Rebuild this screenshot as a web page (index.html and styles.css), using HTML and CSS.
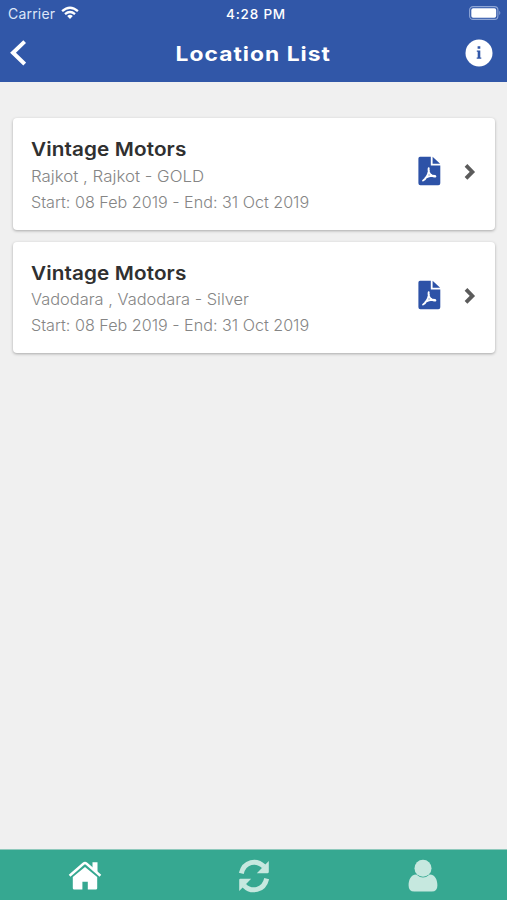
FILE: index.html
```html
<!DOCTYPE html>
<html lang="en">
<head>
<meta charset="utf-8">
<title>Location List</title>
<link rel="stylesheet" href="styles.css">
</head>
<body>
<div class="app">
  <header class="header">
    <div class="status">
      <div class="carrier"><span class="carrier-name">Carrier</span>
        <svg class="wifi" width="18" height="14" viewBox="0 0 18 14"><g fill="none" stroke="#fff" stroke-width="2.3"><path d="M1.1 5.2Q9-1.8 16.9 5.2"/><path d="M4 8.1Q9 3.8 14 8.1"/></g><path fill="#fff" d="M6.2 10Q9 7.7 11.8 10L9 13Z"/></svg>
      </div>
      <time class="time">4:28 PM</time>
      <svg class="battery" width="33" height="14" viewBox="0 0 33 14"><rect x=".6" y=".6" width="28.3" height="12.8" rx="3.5" fill="none" stroke="#8fa6d6" stroke-width="1.1"/><rect x="2.3" y="2.3" width="24.9" height="9.4" rx="1.8" fill="#fff"/><path d="M30.3 4.8Q32.3 7 30.3 9.2Z" fill="#8fa6d6"/></svg>
    </div>
    <nav class="navbar">
      <svg class="back" width="17" height="27" viewBox="0 0 17 27"><path d="M15.7 1.6 4 12.8 15.7 24" fill="none" stroke="#fff" stroke-width="4"/></svg>
      <h1 class="title">Location List</h1>
      <svg class="info" width="28" height="28" viewBox="0 0 28 28"><circle cx="14" cy="14" r="13.5" fill="#fff"/><path fill="#3157a8" d="M12.6 7.2h2.7v2.6h-2.7zM11.8 11.6h3.5v7h1v1.2h-4.6v-1.2h1v-5.8h-.9z"/></svg>
    </nav>
  </header>
  <main class="list">
    <article class="card">
      <div class="details">
        <h2 class="name">Vintage Motors</h2>
        <p class="line place-gold">Rajkot , Rajkot - GOLD</p>
        <p class="line dates">Start: 08 Feb 2019 - End: 31 Oct 2019</p>
      </div>
      <svg class="pdf" width="23" height="30" viewBox="0 0 23 30"><path fill="#2d52a7" d="M2 .7h10.8v8.8h9.5v17.8a2 2 0 0 1-2 2H2.4a2 2 0 0 1-2-2V2.4A1.7 1.7 0 0 1 2 .7ZM14.6.7l7.5 7.1h-7.5z"/><path d="M10.7 12.2c-.7 3 .8 5.6 3 7.3 1.2.8 2.5 1.2 3.7 1M5.1 24.5c2.4-1.1 5.1-5.8 5.8-9.7M7.6 21.6c2.8-1.5 6.1-2.2 9.4-1.6" fill="none" stroke="#fff" stroke-width="1.9" stroke-linecap="round"/></svg>
      <svg class="chevron" width="12" height="18" viewBox="0 0 12 18"><path d="M2 2.4 8.4 8.9 2 15.4" fill="none" stroke="#5b5b5b" stroke-width="3.8"/></svg>
    </article>
    <article class="card">
      <div class="details">
        <h2 class="name">Vintage Motors</h2>
        <p class="line place-silver">Vadodara , Vadodara - Silver</p>
        <p class="line dates">Start: 08 Feb 2019 - End: 31 Oct 2019</p>
      </div>
      <svg class="pdf" width="23" height="30" viewBox="0 0 23 30"><path fill="#2d52a7" d="M2 .7h10.8v8.8h9.5v17.8a2 2 0 0 1-2 2H2.4a2 2 0 0 1-2-2V2.4A1.7 1.7 0 0 1 2 .7ZM14.6.7l7.5 7.1h-7.5z"/><path d="M10.7 12.2c-.7 3 .8 5.6 3 7.3 1.2.8 2.5 1.2 3.7 1M5.1 24.5c2.4-1.1 5.1-5.8 5.8-9.7M7.6 21.6c2.8-1.5 6.1-2.2 9.4-1.6" fill="none" stroke="#fff" stroke-width="1.9" stroke-linecap="round"/></svg>
      <svg class="chevron" width="12" height="18" viewBox="0 0 12 18"><path d="M2 2.4 8.4 8.9 2 15.4" fill="none" stroke="#5b5b5b" stroke-width="3.8"/></svg>
    </article>
  </main>
  <footer class="tabs">
    <div class="tab"><svg width="34" height="30" viewBox="0 0 34 30"><path fill="#fff" d="M17 6 29.2 16v11.2q0 1.4-1.4 1.4h-8v-7.8h-5.4v7.8H6.2q-1.4 0-1.4-1.4V16Z"/><path d="M1.6 14.7 15.4 2.7q1.6-1.3 3.2 0l13.8 12" fill="none" stroke="#fff" stroke-width="2.5"/><path fill="#fff" d="M24.5 1.2h5v11.4l-5-4z"/></svg></div>
    <div class="tab"><svg width="32" height="34" viewBox="0 0 32 34"><g fill="none" stroke="#c6e8df" stroke-width="5"><path d="M3.3 14.4C6.2 2.1 18.5.1 26 7.6"/><path d="M28.7 19.6C25.8 31.9 13.5 33.9 6 26.4"/></g><path fill="#c6e8df" d="M30.8 2v11.1q0 1.1-1.1 1.1H18.8ZM1.2 32V20.9q0-1.1 1.1-1.1h10.9Z"/></svg></div>
    <div class="tab"><svg width="30" height="34" viewBox="0 0 30 34"><path fill="#c6e8df" d="M8.3 15.5Q15 21.6 21.7 15.5C27.6 15.8 29.4 21.3 29.4 26.5Q29.4 32.5 23.8 32.5H6.2Q.6 32.5.6 26.5C.6 21.3 2.4 15.8 8.3 15.5Z"/><circle cx="15" cy="9.3" r="8.5" fill="#c6e8df"/></svg></div>
  </footer>
</div>
</body>
</html>
```
FILE: styles.css
```css
* { box-sizing: border-box; }
body { margin: 0; background: #f0f0f0; font-family: Inter, "Liberation Sans", sans-serif; }
h1, h2, p { margin: 0; }
svg { display: block; flex-shrink: 0; }
.app { height: 900px; display: flex; flex-direction: column; overflow: hidden; }
.header { height: 81.5px; background: #3157a8; color: #fff; flex-shrink: 0; }
.status { height: 26px; display: grid; grid-template-columns: 1fr auto 1fr; align-items: center; padding: 0 5px 0 8px; }
.carrier { display: flex; align-items: center; gap: 6px; color: #dde6f8; }
.carrier-name { font-size: 14px; line-height: 18px; letter-spacing: 0.2px; padding-top: 1px; }
.time { font-size: 13.5px; line-height: 18px; font-weight: 500; letter-spacing: .8px; padding: 2px 0 0 2px; }
.battery { justify-self: end; }
.navbar { height: 54px; display: grid; grid-template-columns: 50px 1fr 50px; align-items: center; padding: 0 14px 0 9px; }
.title { text-align: center; font-size: 20px; line-height: 26px; font-weight: 700; letter-spacing: 0.9px; padding: 1px 0 0 4px; transform: scaleX(1.14); }
.info { justify-self: end; }
.list { flex: 1; padding: 36.5px 12px 0 13px; display: flex; flex-direction: column; gap: 12px; }
.card { height: 111.5px; display: flex; align-items: flex-start; padding: 19px 19px 0 18px; background: #fff; border-radius: 4px; box-shadow: 0 1px 3px #0000004d; white-space: nowrap; }
.details { flex: 1; }
.name { font-size: 19px; line-height: 26px; font-weight: 600; color: #303030; letter-spacing: 0.1px; transform: scaleX(1.09); transform-origin: left; margin-bottom: 0.5px; }
.line { font-size: 15.5px; line-height: 26px; font-weight: 300; color: #858585; transform-origin: left; }
.place-gold { transform: scaleX(1.088); }
.place-silver { transform: scaleX(1.058); }
.dates { transform: scaleX(1.041); }
.pdf { margin: 19px 23px 0 0; }
.chevron { margin-top: 26px; }
.tabs { height: 51px; flex-shrink: 0; display: grid; grid-template-columns: repeat(3, 169px); background: #36a891; border-top: 1px solid #8fc9bc; }
.tab { display: flex; justify-content: center; align-items: center; padding-top: 2px; }
```
